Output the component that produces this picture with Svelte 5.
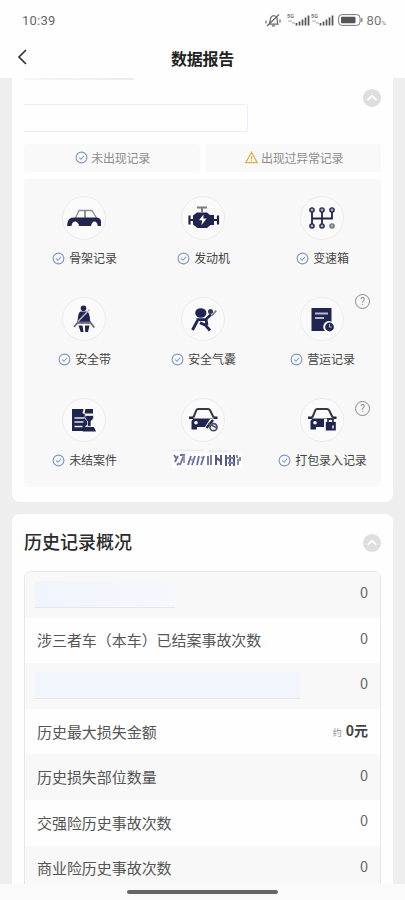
<script>
	const items = [
		{ icon: 'frame', label: '骨架记录' },
		{ icon: 'engine', label: '发动机' },
		{ icon: 'gearbox', label: '变速箱' },
		{ icon: 'belt', label: '安全带' },
		{ icon: 'airbag', label: '安全气囊' },
		{ icon: 'operation', label: '营运记录', help: 'high' },
		{ icon: 'case', label: '未结案件' },
		{ icon: 'carSettings', label: '' },
		{ icon: 'carLock', label: '打包录入记录', help: 'low' }
	];

	const rows = [
		{ hidden: 'short', value: '0' },
		{ label: '涉三者车（本车）已结案事故次数', value: '0' },
		{ hidden: 'long', value: '0' },
		{ label: '历史最大损失金额', value: '0元', approx: true },
		{ label: '历史损失部位数量', value: '0' },
		{ label: '交强险历史事故次数', value: '0' },
		{ label: '商业险历史事故次数', value: '0' }
	];
</script>

{#snippet check()}
	<svg class="check" width="13" height="13" viewBox="0 0 13 13" fill="none">
		<circle cx="6.5" cy="6.5" r="5.4" stroke="#8093c8" stroke-width="1.1" />
		<path d="M4.2 6.5l1.8 1.8 3-3.5" stroke="#7da4d8" stroke-width="1.1" />
	</svg>
{/snippet}

{#snippet collapse()}
	<svg class="collapse" width="18" height="18" viewBox="0 0 18 18" fill="none">
		<circle cx="9" cy="9" r="9" fill="#dedede" />
		<path d="M4.5 11L9 6.8l4.5 4.2" stroke="#fff" stroke-width="1.8" />
	</svg>
{/snippet}

{#snippet signal()}
	<svg width="23" height="14" viewBox="0 0 23 14">
		<text x="0" y="5" class="net">5G</text>
		<path d="M1 8h4M5 10h3" stroke="#aaa" stroke-width="1" />
		<path d="M9.5 12.5v-2.5M12.5 12.5v-4M15.5 12.5v-6M18.5 12.5v-8M21.5 12.5v-10" stroke="#555" stroke-width="1.7" />
	</svg>
{/snippet}

<div class="screen">
	<div class="status">
		<span class="time">10:39</span>
		<div class="status-right">
			<svg class="mute" width="16" height="15" viewBox="0 0 16 15" fill="none" stroke="#666" stroke-width="1.2">
				<path d="M4 11c1.5-2 .8-4.8 2.2-6.8C7.8 2 11 2.3 12 4.8c.7 2-.4 4 1 6.4H4zM7 12.8h3M2 13L14 1.5M1 7.5v3M15 6.5v3" />
			</svg>
			{@render signal()}
			{@render signal()}
			<svg class="battery" width="25" height="12" viewBox="0 0 25 12" fill="none">
				<rect x=".6" y=".6" width="21.5" height="10.8" rx="3.5" stroke="#777" />
				<rect x="3" y="2.8" width="14.5" height="6.4" rx="1" fill="#555" />
				<path d="M23.8 4.3v3.4" stroke="#666" stroke-width="1.2" />
			</svg>
			<span class="percent">80<small>%</small></span>
		</div>
	</div>

	<header class="nav">
		<svg class="back" width="11" height="16" viewBox="0 0 11 16" fill="none" stroke="#333" stroke-width="1.7">
			<path d="M9 1L2 8l7 7" />
		</svg>
		<h1>数据报告</h1>
	</header>

	<main>
		<section class="card checks">
			<div class="card-top">
				<div class="erased">
					<div class="erased-line"></div>
					<div class="erased-box"></div>
				</div>
				{@render collapse()}
			</div>

			<div class="legend">
				<div class="legend-item">
					{@render check()}
					<span>未出现记录</span>
				</div>
				<div class="legend-item">
					<svg width="13" height="13" viewBox="0 0 13 13" fill="none" stroke="#e2b04a" stroke-width="1.3">
						<path d="M6.5 1.3L12.2 11.6H.8zM6.5 4.8v3.6M6.5 9.3v1.2" />
					</svg>
					<span>出现过异常记录</span>
				</div>
			</div>

			<div class="grid">
				{#each items as item}
					<div class="cell">
						<div class="circle">
							<svg width="36" height="36" viewBox="0 0 36 36" fill="none">
								{#if item.icon === 'frame'}
									<path d="M9.5 18l3.5-7.5h13l4.5 7.5" stroke="#8b8c96" stroke-width="1.3" />
									<path d="M19 10.5V18" stroke="#6f7180" stroke-width="1.5" />
									<path d="M9 17.5h20c3.8 0 6 1.5 6 3.7V26h-3.2c-.4-3-1.6-4.6-3.4-4.6-1.8 0-2.7 1.6-3.4 4.6H13.2c-.7-3-2-4.6-4-4.6-1.9 0-3.2 1.4-3.8 4.6H1.2c0-4.2 1.6-7.4 4.3-8.2z" fill="#20244f" />
								{:else if item.icon === 'engine'}
									<path d="M12 7.5h10M17 8v4" stroke="#777b88" stroke-width="2" />
									<path d="M4.5 15.5v9M4.5 20h4M29 20h4M33 15.5v9" stroke="#20244f" stroke-width="2.2" />
									<path d="M12 12.5h10l3 2.5h4v10h-3.5L22 28H12.5L8 24.5v-9z" fill="#20244f" />
									<path d="M18.5 14.5l-4.5 5.7h3.2l-.8 5 5.2-6.7h-3.3z" fill="#fff" />
								{:else if item.icon === 'gearbox'}
									<path d="M8 12v13M18 12v13M28 12v6.5H8" stroke="#20244f" stroke-width="1.8" />
									<g stroke="#20244f" stroke-width="1.4" fill="#a8a9b4">
										<circle cx="8" cy="10" r="2.1" />
										<circle cx="18" cy="10" r="2.1" />
										<circle cx="28" cy="10" r="2.1" />
										<circle cx="8" cy="26" r="2.1" />
										<circle cx="18" cy="26" r="2.1" />
										<circle cx="28" cy="26" r="2.1" stroke="#70727f" />
									</g>
								{:else if item.icon === 'belt'}
									<circle cx="17.5" cy="7.3" r="2.8" fill="#20244f" />
									<path d="M14.5 10.5H21c2 1 2.8 4 3.1 8.5l.7 3.5H11.2l.8-6.5c.4-3 1-4.8 2.5-5.5z" fill="#20244f" />
									<path d="M8 26l3.8-4.5h12.5l4 5" stroke="#666b80" stroke-width="1.8" />
									<path d="M23.5 8.5L12 20.5" stroke="#b4b6c2" stroke-width="1.6" />
									<path d="M12.5 24.5h4l1 6.5h-2.8zM19 24.5h4.5L22 31h-2.8z" fill="#20244f" />
								{:else if item.icon === 'airbag'}
									<ellipse cx="15.8" cy="12" rx="5.6" ry="4.8" fill="#20244f" />
									<path d="M11.5 18.6h9L26 13.5" stroke="#20244f" stroke-width="2.6" />
									<path d="M12.5 19.5L7.5 29M15 21.8l5.5 2.4 4.5 5.3M21 18.5l1 5.5" stroke="#20244f" stroke-width="2.8" />
									<circle cx="25.5" cy="10.5" r="2.5" fill="#343850" />
									<path d="M27 14.5l4.2-5" stroke="#777a88" stroke-width="1.7" />
								{:else if item.icon === 'operation'}
									<path d="M7.5 7h20v23h-20z" fill="#20244f" />
									<path d="M11 12.5h13M11 17h9" stroke="#b7b9c8" stroke-width="2" />
									<circle cx="25" cy="25.8" r="5.8" fill="#fff" />
									<circle cx="25.5" cy="26" r="4.4" fill="#20244f" />
									<path d="M25.5 23v3h2.3" stroke="#b5b6c2" stroke-width="1.1" />
								{:else if item.icon === 'case'}
									<path d="M6 7h11.5l-1 4 3 2v4h3v5l-3 2-1.5 5H6z" fill="#20244f" />
									<path d="M19.5 7h7.5v4.5h-8.5z" fill="#20244f" />
									<path d="M8.5 16h10M8.5 20h9M8.5 24.5h8" stroke="#e4e5eb" stroke-width="1.4" />
									<path d="M19 13.5h8.5c.5 2.8-.7 4.6-2.5 5.5v5.5h-3.5V19c-1.8-.9-2.8-2.7-2.5-5.5z" fill="#20244f" stroke="#fafafa" stroke-width=".7" />
									<path d="M18.5 25h9.5l2 4.5H16.5z" fill="#20244f" />
								{:else}
									<path d="M8.3 15.5l3-7.2c.4-.8 1-1.2 1.8-1.2h10c.9 0 1.5.4 2 1.2l3.6 7.2" stroke="#343944" stroke-width="2" />
									<path d="M4 15.8h4.5M28.5 15.8h4" stroke="#20244f" stroke-width="2.4" />
									<path d="M8.5 16.5h19l2 3V25H12v2.5H6.5V19z" fill="#20244f" />
									<circle cx="11" cy="20.7" r="1.8" fill="#fff" />
									{#if item.icon === 'carSettings'}
										<path d="M25 17l-7 11h14V17z" fill="#fafafa" />
										<path d="M21.5 26l6.5-8" stroke="#20244f" stroke-width="2.4" />
										<circle cx="28.5" cy="25.2" r="3.5" stroke="#4d5068" stroke-width="1.8" />
										<path d="M23 21.5l9 4.5" stroke="#555970" stroke-width="1.7" />
									{:else}
										<path d="M20 17h13v11H20z" fill="#fafafa" />
										<path d="M21.8 20h10v8.5h-10z" fill="#20244f" />
										<path d="M24 20v-3h5v3" stroke="#343850" stroke-width="1.8" />
										<path d="M28 23.5h2v3h-2z" fill="#c2c3ce" />
									{/if}
								{/if}
							</svg>
						</div>

						{#if item.label}
							<div class="cell-label">
								{@render check()}
								<span>{item.label}</span>
							</div>
						{:else}
							<!-- mostly wiped out label, only stroke fragments stay visible -->
							<svg class="fragments" width="70" height="22" viewBox="0 0 70 22" fill="none">
								<path d="M0 4h70v15H0z" fill="#fdfdff" />
								<path d="M0 1.2h31M37 2h19" stroke="#e3e4ef" stroke-width="1" />
								<path d="M2 6l2 3M3 13l3-6M8 6h4l-4 10M5 16l2-2M19 7l-3 9M23 7l-3 9M27 7l-2 9M32 7l-3 9M36 7v9M39 6v10" stroke="#6b6e9e" stroke-width="1.8" />
								<path d="M12 6v8M19 11l3-1M29 8l2 1" stroke="#8f92bc" stroke-width="1.8" />
								<path d="M44 6v10M49 6v10M45 9l3 3M54 6v11M58 6v11M62 6v11" stroke="#555985" stroke-width="2" />
								<path d="M55 9h7M56 14h6M65 6v3M66 10v6M68 8v4" stroke="#7f82a8" stroke-width="1.8" />
							</svg>
						{/if}

						{#if item.help}
							<span class="help {item.help}">?</span>
						{/if}
					</div>
				{/each}
			</div>
		</section>

		<section class="card history">
			<div class="history-head">
				<h2>历史记录概况</h2>
				{@render collapse()}
			</div>
			<div class="table">
				{#each rows as row}
					<div class="row">
						{#if row.hidden}
							<div class="bar {row.hidden}"></div>
						{:else}
							<span class="name">{row.label}</span>
						{/if}
						{#if row.approx}
							<span class="amount"><small>约</small>{row.value}</span>
						{:else}
							<span class="value">{row.value}</span>
						{/if}
					</div>
				{/each}
			</div>
		</section>
	</main>

	<footer><div class="home"></div></footer>
</div>

<style>
	:global(body) {
		overflow: hidden;
	}

	.screen {
		width: 405px;
		height: 900px;
		display: flex;
		flex-direction: column;
		overflow: hidden;
		background: #eeeeee;
		font-family: 'Noto Sans CJK SC', 'Noto Sans', sans-serif;
		color: #444;
	}

	svg {
		display: block;
		flex-shrink: 0;
	}

	.status {
		height: 40px;
		flex-shrink: 0;
		box-sizing: border-box;
		padding: 0 19px 0 22px;
		background: #fefefe;
		display: flex;
		align-items: center;
		justify-content: space-between;
	}

	.time {
		font-family: Roboto, sans-serif;
		font-size: 13px;
		letter-spacing: 0.25px;
		color: #666;
	}

	.status-right {
		display: flex;
		align-items: center;
		gap: 1px;
	}

	.mute {
		margin-right: 5px;
	}

	.net {
		font: 700 5.5px Roboto, sans-serif;
		fill: #777;
	}

	.battery {
		margin-left: 3px;
	}

	.percent {
		font-family: Roboto, sans-serif;
		font-size: 13px;
		margin-left: 2px;
		letter-spacing: 0.2px;
		color: #777;
	}

	.percent small {
		font-size: 6px;
	}

	.nav {
		height: 38px;
		flex-shrink: 0;
		background: #fefefe;
		display: flex;
		align-items: center;
		justify-content: center;
		position: relative;
	}

	.back {
		position: absolute;
		left: 17px;
		top: 9px;
	}

	h1 {
		margin: 0;
		font-size: 16px;
		line-height: 36px;
		padding-bottom: 2px;
		font-weight: 700;
		letter-spacing: -0.2px;
		color: #222;
	}

	main {
		flex: 1;
		min-height: 0;
		overflow: hidden;
		padding: 0 12px;
		display: flex;
		flex-direction: column;
		gap: 12px;
	}

	.card {
		background: #fefefe;
		border-radius: 8px;
		padding: 0 12px;
		flex-shrink: 0;
	}

	.checks {
		height: 424px;
		box-sizing: border-box;
		border-radius: 0 0 8px 8px;
	}

	.card-top {
		height: 66px;
		display: flex;
		align-items: flex-start;
		justify-content: space-between;
	}

	.erased-line {
		width: 110px;
		height: 2px;
		background: linear-gradient(90deg, #f5f5f5, #ececec);
	}

	.erased-box {
		width: 223px;
		height: 26px;
		margin-top: 24px;
		border: 1px solid #ececf6;
		border-left: none;
		border-radius: 0 3px 3px 0;
	}

	.card-top .collapse {
		margin-top: 11px;
	}

	.legend {
		display: flex;
		gap: 6px;
		margin-bottom: 7px;
	}

	.legend-item {
		flex: 1;
		height: 26px;
		padding-bottom: 2px;
		display: flex;
		align-items: center;
		justify-content: center;
		gap: 3px;
		background: #f9f9f9;
		border-radius: 3px;
		font-size: 12px;
		letter-spacing: -0.25px;
		color: #8c8c8c;
	}

	.legend-item span {
		margin-right: -2px;
	}

	.grid {
		height: 308px;
		box-sizing: border-box;
		padding-top: 17px;
		background: #f8f8f8;
		border-radius: 4px;
		display: grid;
		grid-template-columns: repeat(3, 1fr);
		grid-auto-rows: 101px;
	}

	.cell {
		position: relative;
		display: flex;
		flex-direction: column;
		align-items: center;
	}

	.circle {
		width: 42px;
		height: 42px;
		border: 1px solid #ededed;
		border-radius: 50%;
		background: #fafafa;
		display: flex;
		align-items: center;
		justify-content: center;
	}

	.cell-label {
		height: 20px;
		margin: 8px 0 0 2px;
		display: flex;
		align-items: center;
		gap: 4px;
		font-size: 12px;
		line-height: 20px;
		letter-spacing: -0.1px;
		white-space: nowrap;
		color: #444;
	}

	.fragments {
		margin: 7px 0 0 9px;
	}

	.help {
		position: absolute;
		right: 11px;
		width: 13px;
		height: 13px;
		border: 1px solid #888;
		border-radius: 50%;
		text-align: center;
		font: 10px/13px Roboto, sans-serif;
		color: #888;
	}

	.help.high {
		top: -3px;
	}

	.help.low {
		top: 3px;
	}

	.history-head {
		height: 57px;
		display: flex;
		align-items: center;
		justify-content: space-between;
	}

	h2 {
		margin: 0;
		font-size: 18px;
		line-height: 55px;
		padding-bottom: 2px;
		font-weight: 500;
		color: #2b2b2b;
	}

	.table {
		border: 1px solid #e6e6e6;
		border-radius: 7px;
		overflow: hidden;
	}

	.row {
		height: 45.6px;
		box-sizing: border-box;
		padding: 0 12px;
		display: flex;
		align-items: center;
		justify-content: space-between;
		background: #fefefe;
	}

	.row:nth-child(odd) {
		background: #f8f8f8;
	}

	.name {
		font-size: 15px;
		line-height: 20px;
		letter-spacing: -0.05px;
		color: #555;
	}

	.value {
		font-size: 14.5px;
		line-height: 20px;
		margin-bottom: 5px;
		color: #666;
	}

	.amount {
		font-size: 14px;
		line-height: 20px;
		font-weight: 700;
		color: #444;
	}

	.amount small {
		font-size: 9px;
		font-weight: 400;
		margin-right: 4px;
		color: #888;
	}

	.bar {
		height: 26px;
		margin-left: -2px;
		border-bottom: 1px solid #e4e6f5;
		background: #f3f5fd;
	}

	.bar.short {
		width: 140px;
		background: linear-gradient(90deg, #f2f4fd, #f7f8fc);
	}

	.bar.long {
		width: 265px;
	}

	footer {
		height: 16px;
		flex-shrink: 0;
		background: #fafafa;
		display: flex;
		justify-content: center;
		align-items: flex-start;
	}

	.home {
		width: 151px;
		height: 4px;
		margin-top: 6px;
		border-radius: 2px;
		background: #666;
	}
</style>
